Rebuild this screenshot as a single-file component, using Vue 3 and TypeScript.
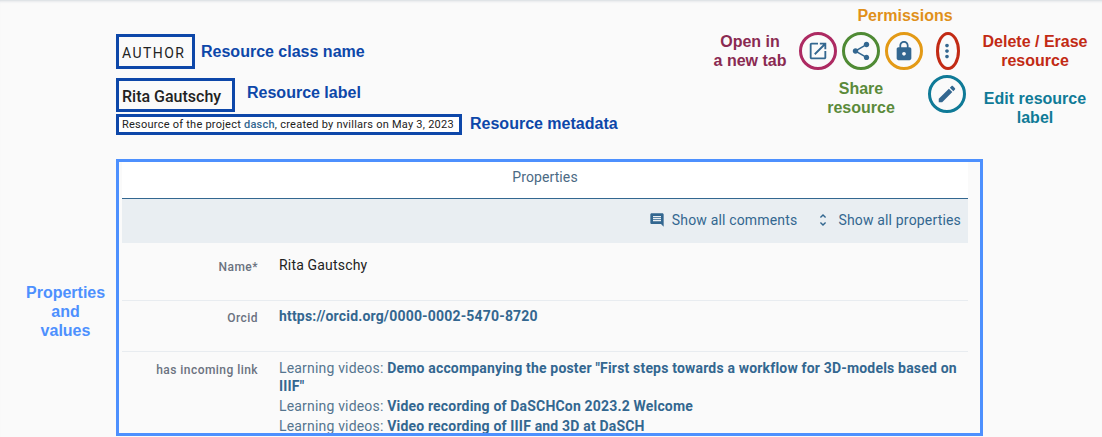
<script setup lang="ts">
const icons = {
  open: 'M19 19H5V5h7V3H5c-1.11 0-2 .9-2 2v14c0 1.1.89 2 2 2h14c1.1 0 2-.9 2-2v-7h-2v7zM14 3v2h3.59l-9.83 9.83 1.41 1.41L19 6.41V10h2V3h-7z',
  share: 'M18 16.08c-.76 0-1.44.3-1.96.77L8.91 12.7c.05-.23.09-.46.09-.7s-.04-.47-.09-.7l7.05-4.11c.54.5 1.25.81 2.04.81 1.66 0 3-1.34 3-3s-1.34-3-3-3-3 1.34-3 3c0 .24.04.47.09.7L8.04 9.81C7.5 9.31 6.79 9 6 9c-1.66 0-3 1.34-3 3s1.34 3 3 3c.79 0 1.5-.31 2.04-.81l7.12 4.16c-.05.21-.08.43-.08.65 0 1.61 1.31 2.92 2.92 2.92 1.61 0 2.92-1.31 2.92-2.92s-1.31-2.92-2.92-2.92z',
  lock: 'M18 8h-1V6c0-2.76-2.24-5-5-5S7 3.24 7 6v2H6c-1.1 0-2 .9-2 2v10c0 1.1.9 2 2 2h12c1.1 0 2-.9 2-2V10c0-1.1-.9-2-2-2zm-6 9c-1.1 0-2-.9-2-2s.9-2 2-2 2 .9 2 2-.9 2-2 2zm3.1-9H8.9V6c0-1.71 1.39-3.1 3.1-3.1 1.71 0 3.1 1.39 3.1 3.1v2z',
  more: 'M12 8c1.1 0 2-.9 2-2s-.9-2-2-2-2 .9-2 2 .9 2 2 2zm0 2c-1.1 0-2 .9-2 2s.9 2 2 2 2-.9 2-2-.9-2-2-2zm0 6c-1.1 0-2 .9-2 2s.9 2 2 2 2-.9 2-2-.9-2-2-2z',
  edit: 'M3 17.25V21h3.75L17.81 9.94l-3.75-3.75L3 17.25zM20.71 7.04c.39-.39.39-1.02 0-1.41l-2.34-2.34c-.39-.39-1.02-.39-1.41 0l-1.83 1.83 3.75 3.75 1.83-1.83z',
  comment: 'M21.99 4c0-1.1-.89-2-1.99-2H4c-1.1 0-2 .9-2 2v12c0 1.1.9 2 2 2h14l4 4-.01-18zM18 14H6v-2h12v2zm0-3H6V9h12v2zm0-3H6V6h12v2z',
  unfold: 'M12 5.83L15.17 9l1.41-1.41L12 3 7.41 7.59 8.83 9 12 5.83zm0 12.34L8.83 15l-1.41 1.41L12 21l4.59-4.59L15.17 15 12 18.17z',
}
const actions = [
  { key: 'open', path: icons.open, ring: 'ring-open' },
  { key: 'share', path: icons.share, ring: 'ring-share' },
  { key: 'lock', path: icons.lock, ring: 'ring-lock' },
  { key: 'more', path: icons.more, ring: 'ring-more' },
]
const incoming = [
  'Demo accompanying the poster "First steps towards a workflow for 3D-models based on IIIF"',
  'Video recording of DaSCHCon 2023.2 Welcome',
  'Video recording of IIIF and 3D at DaSCH',
]
</script>

<template>
  <div class="page">
    <header class="head">
      <div class="titles">
        <div class="class-row">
          <div class="hl class-name">AUTHOR</div>
          <span class="note note-class">Resource class name</span>
        </div>
        <div class="label-row">
          <div class="hl res-label">Rita Gautschy</div>
          <span class="note note-label">Resource label</span>
        </div>
        <div class="meta-row">
          <div class="hl res-meta">Resource of the project <a class="link medium">dasch</a>, created by nvillars on May 3, 2023</div>
          <span class="note note-meta">Resource metadata</span>
        </div>
      </div>
      <div class="tools">
        <div class="tool-row">
          <span v-for="a in actions" :key="a.key" class="tool" :class="a.key">
            <span class="ring" :class="a.ring"></span>
            <svg viewBox="0 0 24 24" class="tool-icon"><path :d="a.path" /></svg>
          </span>
        </div>
        <div class="edit-row">
          <span class="tool edit">
            <span class="ring ring-edit"></span>
            <svg viewBox="0 0 24 24" class="tool-icon"><path :d="icons.edit" /></svg>
          </span>
        </div>
        <span class="tnote t-open">Open in<br />a new tab</span>
        <span class="tnote t-perm">Permissions</span>
        <span class="tnote t-del">Delete / Erase<br />resource</span>
        <span class="tnote t-share">Share<br />resource</span>
        <span class="tnote t-edit">Edit resource<br />label</span>
      </div>
    </header>

    <section class="panel">
      <span class="panel-outline"></span>
      <span class="panel-note">Properties<br />and<br />values</span>
      <div class="tab">Properties</div>
      <div class="toolbar">
        <span class="tb-btn">
          <svg viewBox="0 0 24 24" class="tb-icon"><path :d="icons.comment" /></svg>
          Show all comments
        </span>
        <span class="tb-btn">
          <svg viewBox="0 0 24 24" class="tb-icon"><path :d="icons.unfold" /></svg>
          Show all properties
        </span>
      </div>
      <div class="row row-name">
        <div class="prop">Name*</div>
        <div class="val">Rita Gautschy</div>
      </div>
      <div class="row row-orcid">
        <div class="prop">Orcid</div>
        <div class="val"><a class="link strong">https://orcid.org/0000-0002-5470-8720</a></div>
      </div>
      <div class="row row-links">
        <div class="prop">has incoming link</div>
        <div class="val vals">
          <div v-for="t in incoming" :key="t" class="inc">Learning videos: <a class="link strong">{{ t }}</a></div>
        </div>
      </div>
    </section>
  </div>
</template>

<style>
html, body { margin: 0; padding: 0; background: #fafafa; }
</style>

<style scoped>
.page {
  position: relative;
  width: 1102px;
  height: 437px;
  overflow: hidden;
  background: #fafafa;
  font-family: Roboto, "Liberation Sans", sans-serif;
  color: #222;
  box-shadow: inset 0 3px 3px -2px #d3d8de;
}
.head {
  display: flex;
  justify-content: space-between;
  padding: 34px 0 0 116px;
  height: 162px;
  box-sizing: border-box;
}
.titles { display: flex; flex-direction: column; align-items: flex-start; }
.hl { border: 3px solid #0d47a9; box-sizing: border-box; padding-left: 3px; white-space: nowrap; }
.class-row, .label-row, .meta-row { display: flex; align-items: center; position: relative; }
.class-name { width: 79px; height: 35px; font-size: 14px; letter-spacing: 1.45px; line-height: 33px; }
.res-label { margin-top: 9px; width: 119px; height: 34px; font-size: 16px; font-weight: 500; line-height: 32px; }
.res-meta { margin-top: 2px; width: 346px; height: 21px; font-size: 11px; line-height: 15px; letter-spacing: 0.24px; background: #fff; }
.note {
  font-family: "Liberation Sans", Arial, sans-serif;
  font-weight: 700;
  font-size: 16px;
  color: #0d47a9;
  white-space: nowrap;
}
.note-class { margin-left: 6px; }
.note-label { margin-left: 12px; margin-top: 4px; }
.note-meta { margin-left: 8px; }
.link { color: #336790; text-decoration: none; }
.strong { font-weight: 700; }
.medium { font-weight: 500; }

.tools { position: relative; width: 302px; margin-top: -34px; }
.tool-row { display: flex; position: absolute; left: 0; top: 33px; }
.edit-row { position: absolute; left: 129px; top: 76px; }
.tool { position: relative; display: flex; width: 36px; height: 36px; align-items: center; justify-content: center; }
.tool.share, .tool.lock, .tool.more { margin-left: 7px; }
.tool-icon { width: 22px; height: 22px; fill: #336790; position: relative; }
.ring { position: absolute; inset: -1px; border-radius: 50%; border: 3px solid; box-sizing: border-box; }
.ring-open { border-color: #ad2a62; }
.ring-share { border-color: #4f8a34; }
.ring-lock { border-color: #e39a16; }
.ring-more { border-color: #c22a14; left: 7px; right: 5px; top: -1px; bottom: -1px; }
.ring-edit { border-color: #0f7a97; }

.tnote {
  position: absolute;
  font-family: "Liberation Sans", Arial, sans-serif;
  font-weight: 700;
  font-size: 16px;
  line-height: 19px;
  text-align: center;
  white-space: nowrap;
  transform: translateX(-50%);
}
.t-open { left: -50px; top: 32px; color: #8a2a52; }
.t-perm { left: 105px; top: 6px; color: #e0901a; }
.t-del { left: 235px; top: 32px; color: #c22a14; }
.t-share { left: 61px; top: 79px; color: #5a8a3a; }
.t-edit { left: 235px; top: 89px; color: #0f7a97; }

.panel { position: relative; margin-left: 122px; width: 846px; }
.panel-outline {
  position: absolute;
  left: -6px; top: -3px;
  width: 867px; height: 277px;
  box-sizing: border-box;
  border: 3px solid #4d90fe;
  z-index: 2;
  pointer-events: none;
}
.panel-note {
  position: absolute;
  left: -96px; top: 121px;
  width: 79px;
  text-align: center;
  font-family: "Liberation Sans", Arial, sans-serif;
  font-weight: 700;
  font-size: 16px;
  line-height: 19px;
  color: #4d90fe;
}
.tab {
  height: 37px;
  background: #fff;
  border-bottom: 1px solid #336790;
  box-sizing: border-box;
  text-align: center;
  font-size: 14px;
  line-height: 30px;
  color: #4b6a84;
  letter-spacing: 0.1px;
}
.toolbar {
  height: 44px;
  background: #e9eef2;
  display: flex;
  justify-content: flex-end;
  align-items: center;
  gap: 18px;
  padding: 0 7px 2px 0;
  box-sizing: border-box;
  font-size: 14px;
  color: #336790;
  letter-spacing: 0.17px;
}
.tb-btn { display: flex; align-items: center; gap: 7px; }
.tb-icon { width: 16px; height: 16px; fill: #336790; }
.row {
  display: grid;
  grid-template-columns: 136px 1fr;
  column-gap: 21px;
  border-bottom: 1px solid #e8ecf0;
  box-sizing: border-box;
}
.row-name { height: 58px; padding-top: 13px; }
.row-orcid { height: 51px; padding-top: 6px; }
.row-links { border-bottom: 0; padding-top: 7px; }
.prop {
  text-align: right;
  font-size: 12px;
  font-weight: 500;
  color: #6b7280;
  line-height: 20px;
  padding-top: 1px;
  letter-spacing: 0.45px;
}
.val { font-size: 14px; line-height: 18px; color: #222; letter-spacing: 0.18px; }
.vals { color: #55758f; width: 680px; }
.inc { margin-bottom: 2px; line-height: 18px; }
</style>
